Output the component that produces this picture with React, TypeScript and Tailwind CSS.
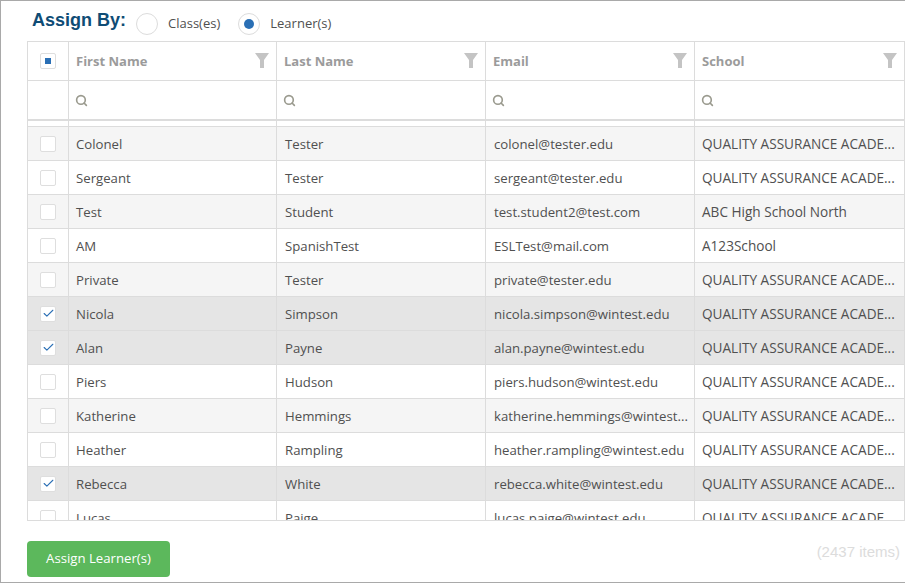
import { Check, Search } from 'lucide-react';

const columns = ['First Name', 'Last Name', 'Email', 'School'];
const qa = 'QUALITY ASSURANCE ACADE...';

const rows = [
  { first: 'Colonel', last: 'Tester', email: 'colonel@tester.edu', school: qa },
  { first: 'Sergeant', last: 'Tester', email: 'sergeant@tester.edu', school: qa },
  { first: 'Test', last: 'Student', email: 'test.student2@test.com', school: 'ABC High School North' },
  { first: 'AM', last: 'SpanishTest', email: 'ESLTest@mail.com', school: 'A123School' },
  { first: 'Private', last: 'Tester', email: 'private@tester.edu', school: qa },
  { first: 'Nicola', last: 'Simpson', email: 'nicola.simpson@wintest.edu', school: qa, checked: true },
  { first: 'Alan', last: 'Payne', email: 'alan.payne@wintest.edu', school: qa, checked: true },
  { first: 'Piers', last: 'Hudson', email: 'piers.hudson@wintest.edu', school: qa },
  { first: 'Katherine', last: 'Hemmings', email: 'katherine.hemmings@wintest...', school: qa },
  { first: 'Heather', last: 'Rampling', email: 'heather.rampling@wintest.edu', school: qa },
  { first: 'Rebecca', last: 'White', email: 'rebecca.white@wintest.edu', school: qa, checked: true },
  { first: 'Lucas', last: 'Paige', email: 'lucas.paige@wintest.edu', school: qa },
];

const gridCols = 'grid grid-cols-[41px_208px_209px_209px_1fr]';

function FunnelIcon() {
  return (
    <svg width="14" height="15" viewBox="0 0 14 15" className="absolute right-[7px] top-[11px]">
      <path d="M0 0H14L9 7V15H5V7Z" fill="#c4c4c4" />
    </svg>
  );
}

function Radio({ label, selected }: { label: string; selected?: boolean }) {
  return (
    <div className="flex items-center gap-[10px]">
      <span className="flex h-[22px] w-[22px] items-center justify-center rounded-full border border-[#dcdcdc] bg-white">
        {selected && <span className="h-[10px] w-[10px] rounded-full bg-[#2a6fb5]" />}
      </span>
      <span className="text-[13px] text-[#505050]">{label}</span>
    </div>
  );
}

function Box({ children }: { children?: React.ReactNode }) {
  return (
    <span className="flex h-[16px] w-[16px] items-center justify-center rounded-[2px] border border-[#dedede] bg-white">
      {children}
    </span>
  );
}

export default function App() {
  return (
    <div className="flex h-[583px] w-[905px] flex-col overflow-hidden border-t border-b border-l border-[#a9a9a9] bg-white font-['Open_Sans',sans-serif]">
      <div className="flex h-[40px] items-start gap-[10px] pl-[31px] pt-[9px]">
        <h1 className="font-['Liberation_Sans',sans-serif] text-[18px] font-bold leading-[20px] text-[#0f4c75]">
          Assign By:
        </h1>
        <div className="mt-[3px] flex gap-[18px]">
          <Radio label="Class(es)" />
          <Radio label="Learner(s)" selected />
        </div>
      </div>

      <div className="ml-[26px] border-b border-l border-t border-[#dcdcdc]">
        <div className={`${gridCols} h-[39px] border-b border-[#dcdcdc]`}>
          <div className="flex items-center justify-center border-r border-[#dcdcdc]">
            <Box>
              <span className="h-[6px] w-[6px] bg-[#2a6fb5]" />
            </Box>
          </div>
          {columns.map((name) => (
            <div key={name} className="relative flex items-center border-r border-[#dcdcdc] pl-[7px] pt-[2px] text-[13px] font-bold text-[#9b9b9b]">
              {name}
              <FunnelIcon />
            </div>
          ))}
        </div>
        <div className={`${gridCols} h-[40px] border-b-[2px] border-[#dcdcdc]`}>
          <div className="border-r border-[#dcdcdc]" />
          {columns.map((name) => (
            <div key={name} className="flex items-center border-r border-[#dcdcdc] pl-[6px]">
              <Search size={13} strokeWidth={3} className="text-[#9a9a8e]" />
            </div>
          ))}
        </div>

        <div className="h-[399px] overflow-hidden">
          <div className={`${gridCols} h-[6px] border-b border-[#dcdcdc]`}>
            <div className="border-r border-[#dcdcdc]" />
            <div className="border-r border-[#dcdcdc]" />
            <div className="border-r border-[#dcdcdc]" />
            <div className="border-r border-[#dcdcdc]" />
            <div className="border-r border-[#dcdcdc]" />
          </div>
          {rows.map((row, i) => (
            <div
              key={row.email}
              className={`${gridCols} h-[34px] border-b border-[#dcdcdc] text-[13.2px] text-[#505050] ${
                row.checked ? 'bg-[#e5e5e5]' : i % 2 === 0 ? 'bg-[#f5f5f5]' : 'bg-white'
              }`}
            >
              <div className="flex items-center justify-center border-r border-[#dcdcdc]">
                <Box>
                  {row.checked && <Check size={13} strokeWidth={2} className="text-[#2a6fb5]" />}
                </Box>
              </div>
              <div className="flex items-center border-r border-[#dcdcdc] pl-[7px] pt-[2px]">{row.first}</div>
              <div className="flex items-center border-r border-[#dcdcdc] pl-[8px] pt-[2px]">{row.last}</div>
              <div className="flex items-center border-r border-[#dcdcdc] pl-[8px] pt-[2px] whitespace-nowrap">{row.email}</div>
              <div className="flex items-center border-r border-[#dcdcdc] pl-[7px] pt-[2px] whitespace-nowrap text-[13.6px]">{row.school}</div>
            </div>
          ))}
        </div>
      </div>

      <div className="flex items-start justify-between pl-[26px] pr-[5px] pt-[20px]">
        <button className="h-[36px] w-[143px] rounded-[4px] bg-[#5cb85c] text-[13.2px] text-white">
          Assign Learner(s)
        </button>
        <span className="font-['Liberation_Sans',sans-serif] text-[15px] text-[#dcdcdc]">(2437 items)</span>
      </div>
    </div>
  );
}
